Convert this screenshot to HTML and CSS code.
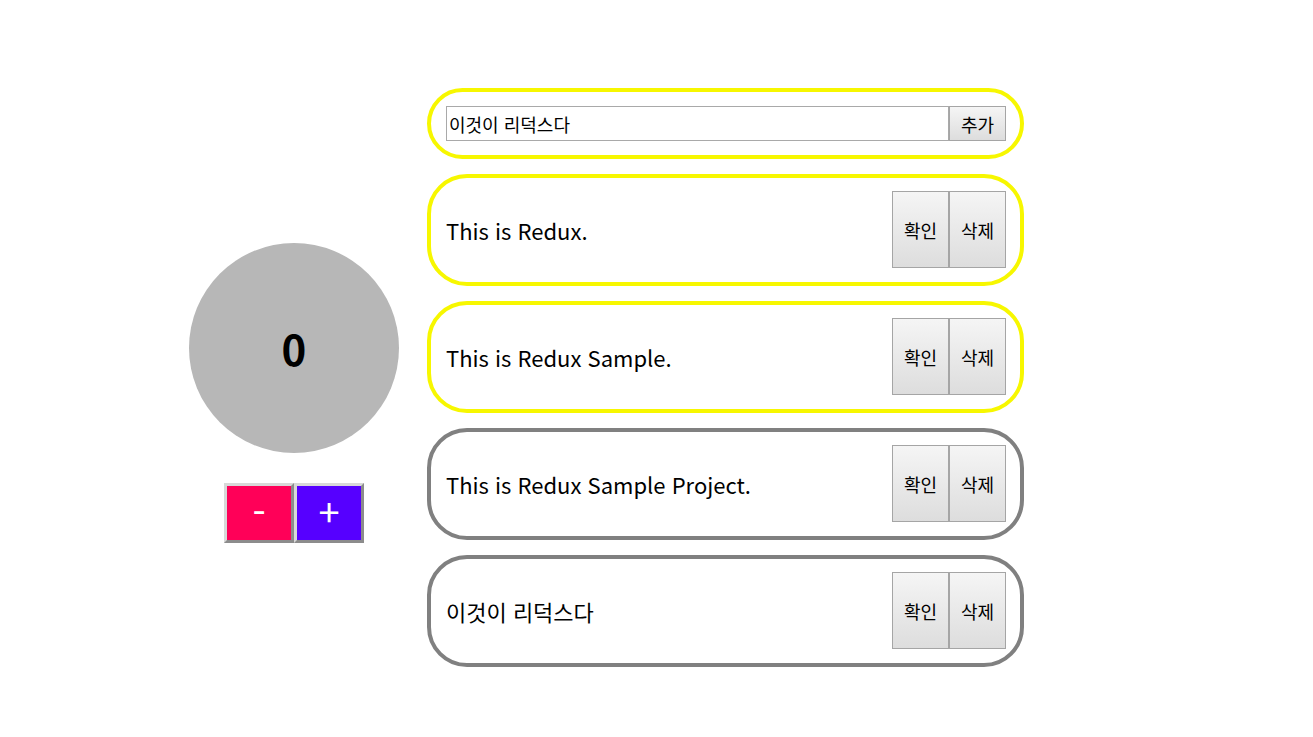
FILE: index.html
```html
<!DOCTYPE html>
<html lang="ko">
<head>
<meta charset="utf-8">
<title>Redux Sample</title>
<link rel="stylesheet" href="styles.css">
</head>
<body>
<div class="app">
  <div class="counter">
    <div class="circle">0</div>
    <div class="controls">
      <button class="ctl minus">-</button>
      <button class="ctl plus">+</button>
    </div>
  </div>
  <div class="list">
    <div class="card card-input active">
      <input class="field" type="text" value="이것이 리덕스다">
      <button class="btn">추가</button>
    </div>
    <div class="card active">
      <span class="label">This is Redux.</span>
      <div class="actions"><button class="btn tall">확인</button><button class="btn tall">삭제</button></div>
    </div>
    <div class="card active">
      <span class="label">This is Redux Sample.</span>
      <div class="actions"><button class="btn tall">확인</button><button class="btn tall">삭제</button></div>
    </div>
    <div class="card">
      <span class="label">This is Redux Sample Project.</span>
      <div class="actions"><button class="btn tall">확인</button><button class="btn tall">삭제</button></div>
    </div>
    <div class="card">
      <span class="label">이것이 리덕스다</span>
      <div class="actions"><button class="btn tall">확인</button><button class="btn tall">삭제</button></div>
    </div>
  </div>
</div>
</body>
</html>
```
FILE: styles.css
```css
* { box-sizing: border-box; }
body {
  margin: 0;
  background: #fff;
  font-family: "Noto Sans CJK KR", "Noto Sans", sans-serif;
  color: #000;
}
.app {
  display: flex;
  align-items: flex-start;
  padding: 88px 0 0 189px;
}
.counter {
  width: 210px;
  margin-top: 155px;
  display: flex;
  flex-direction: column;
  align-items: center;
}
.circle {
  width: 210px;
  height: 210px;
  border-radius: 50%;
  background: #b7b7b7;
  display: flex;
  align-items: center;
  justify-content: center;
  font-size: 42px;
  font-weight: 700;
  line-height: 1;
}
.controls {
  display: flex;
  margin-top: 30px;
}
.ctl {
  width: 70px;
  height: 60px;
  border-width: 3px;
  border-style: solid;
  border-color: #d8d8d8 #8c8c8c #8c8c8c #d8d8d8;
  color: #fff;
  font-family: "Noto Sans CJK KR", "Noto Sans", sans-serif;
  font-size: 38px;
  font-weight: 400;
  line-height: 1;
  padding: 0 0 4px;
}
.minus { background: #ff0058; }
.plus { background: #5600ff; }
.list {
  margin-left: 28px;
  width: 597px;
  display: flex;
  flex-direction: column;
  gap: 15px;
}
.card {
  display: flex;
  align-items: center;
  justify-content: space-between;
  border: 4px solid #808080;
  border-radius: 40px;
  padding: 13px 14px 14px 15px;
  height: 112px;
}
.card.active { border-color: #f7f700; }
.card-input {
  height: 71px;
  padding: 14px 14px 14px 15px;
  justify-content: flex-start;
}
.field {
  flex: 1;
  height: 35px;
  border: 1px solid #a9a9a9;
  font-family: "Noto Sans CJK KR", "Noto Sans", sans-serif;
  font-size: 18px;
  padding: 0 2px;
  outline: none;
  color: #000;
}
.label {
  font-size: 22px;
  line-height: 1;
}
.actions { display: flex; }
.btn {
  width: 57px;
  height: 35px;
  border: 1px solid #a5a5a5;
  background: linear-gradient(#f5f5f5, #dddddd);
  font-family: "Noto Sans CJK KR", "Noto Sans", sans-serif;
  font-size: 18px;
  color: #000;
  padding: 0;
}
.btn.tall { height: 77px; }
```
